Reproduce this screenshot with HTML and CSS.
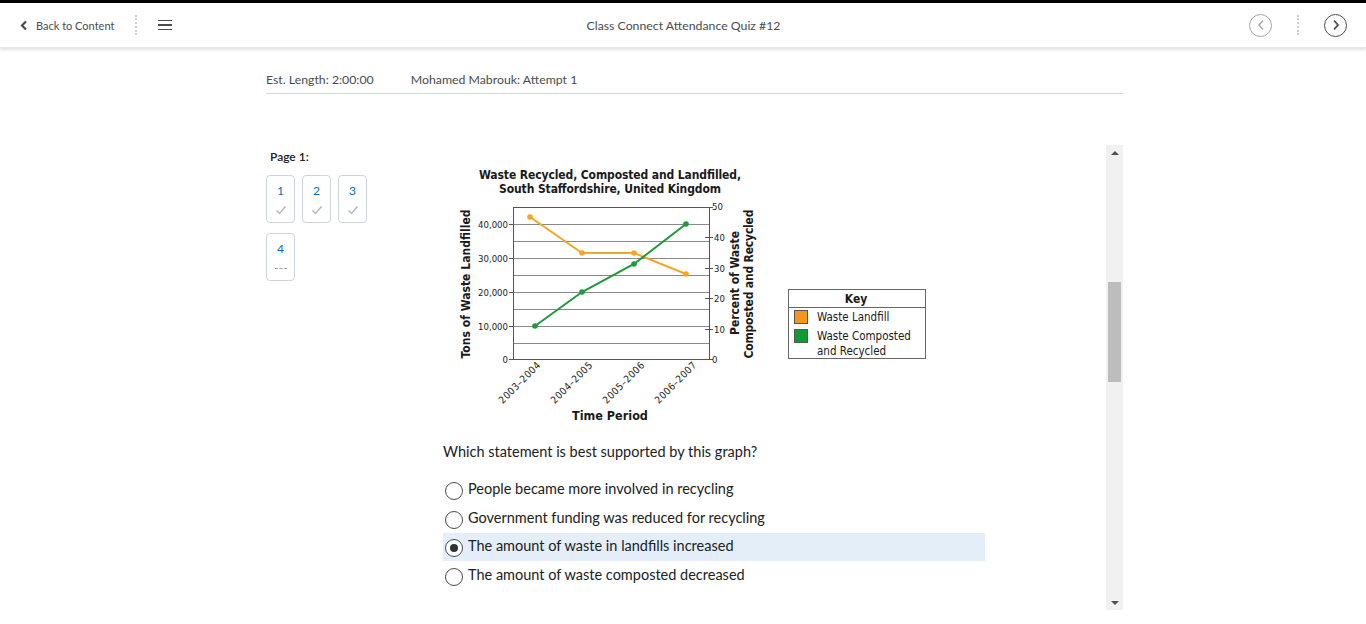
FILE: index.html
```html
<!DOCTYPE html>
<html lang="en">

<head>
    <meta charset="UTF-8">
    <meta name="viewport" content="width=device-width, initial-scale=1.0">
    <title>Class Connect Attendance Quiz #12</title>
    <link rel="stylesheet" href="styles.css">
</head>

<body>
    <div class="topbar"></div>

    <header class="navbar">
        <div class="nav-left">
            <a class="back-link" href="#">
                <svg width="8" height="11" viewBox="0 0 8 11"><path d="M6 1.5 L2 5.5 L6 9.5" fill="none" stroke="#494c4e" stroke-width="2.2"/></svg>
                Back to Content
            </a>
            <span class="dots"></span>
            <span class="menu-icon"><span></span><span></span><span></span></span>
        </div>
        <div class="nav-title">Class Connect Attendance Quiz #12</div>
        <div class="nav-right">
            <span class="circle-btn disabled">
                <svg width="8" height="12" viewBox="0 0 8 12"><path d="M6 1.5 L2 6 L6 10.5" fill="none" stroke="#a0a4a8" stroke-width="1.4"/></svg>
            </span>
            <span class="dots"></span>
            <span class="circle-btn">
                <svg width="8" height="12" viewBox="0 0 8 12"><path d="M2 1.5 L6 6 L2 10.5" fill="none" stroke="#494c4e" stroke-width="1.8"/></svg>
            </span>
        </div>
    </header>

    <main class="page-wrap">
        <div class="info-row">
            <span>Est. Length: 2:00:00</span>
            <span>Mohamed Mabrouk: Attempt 1</span>
        </div>

        <div class="quiz">
            <aside class="page-nav">
                <div class="page-label">Page 1:</div>
                <div class="qboxes">
                    <a class="qbox" href="#"><span class="qnum">1</span><svg class="check" width="12" height="10" viewBox="0 0 12 10"><path d="M1.5 5.5 L4.5 8.5 L10.5 1.5" fill="none" stroke="#b5b9bd" stroke-width="1.5"/></svg></a>
                    <a class="qbox" href="#"><span class="qnum">2</span><svg class="check" width="12" height="10" viewBox="0 0 12 10"><path d="M1.5 5.5 L4.5 8.5 L10.5 1.5" fill="none" stroke="#b5b9bd" stroke-width="1.5"/></svg></a>
                    <a class="qbox" href="#"><span class="qnum">3</span><svg class="check" width="12" height="10" viewBox="0 0 12 10"><path d="M1.5 5.5 L4.5 8.5 L10.5 1.5" fill="none" stroke="#b5b9bd" stroke-width="1.5"/></svg></a>
                    <a class="qbox" href="#"><span class="qnum">4</span><span class="unanswered"></span></a>
                </div>
            </aside>

            <section class="frame">
                <div class="frame-content">
                    <svg class="chart" width="480" height="270" viewBox="0 0 480 270">
                        <g font-family="'DejaVu Sans Condensed', 'DejaVu Sans', sans-serif" fill="#1a1a1a">
                            <text x="155" y="18" font-size="12" font-weight="bold" text-anchor="middle" textLength="262">Waste Recycled, Composted and Landfilled,</text>
                            <text x="155" y="32" font-size="12" font-weight="bold" text-anchor="middle" textLength="222">South Staffordshire, United Kingdom</text>

                            <!-- grid -->
                            <g stroke="#8a8a8a" stroke-width="1">
                                <line x1="58" y1="63.5" x2="254" y2="63.5"/>
                                <line x1="58" y1="80.5" x2="254" y2="80.5"/>
                                <line x1="58" y1="97.5" x2="254" y2="97.5"/>
                                <line x1="58" y1="114.5" x2="254" y2="114.5"/>
                                <line x1="58" y1="131.5" x2="254" y2="131.5"/>
                                <line x1="58" y1="148.5" x2="254" y2="148.5"/>
                                <line x1="58" y1="165.5" x2="254" y2="165.5"/>
                                <line x1="58" y1="182.5" x2="254" y2="182.5"/>
                            </g>
                            <rect x="58.5" y="46.5" width="196" height="152" fill="none" stroke="#555" stroke-width="1"/>

                            <!-- ticks -->
                            <g stroke="#555" stroke-width="1">
                                <line x1="54" y1="63.5" x2="58" y2="63.5"/>
                                <line x1="54" y1="97.5" x2="58" y2="97.5"/>
                                <line x1="54" y1="131.5" x2="58" y2="131.5"/>
                                <line x1="54" y1="165.5" x2="58" y2="165.5"/>
                                <line x1="54" y1="198.5" x2="58" y2="198.5"/>
                                <line x1="250" y1="46.5" x2="258" y2="46.5"/>
                                <line x1="250" y1="76.5" x2="258" y2="76.5"/>
                                <line x1="250" y1="107.5" x2="258" y2="107.5"/>
                                <line x1="250" y1="137.5" x2="258" y2="137.5"/>
                                <line x1="250" y1="168.5" x2="258" y2="168.5"/>
                                <line x1="250" y1="198.5" x2="258" y2="198.5"/>
                            </g>

                            <g font-size="9.5" text-anchor="end">
                                <text x="53" y="67">40,000</text>
                                <text x="53" y="101">30,000</text>
                                <text x="53" y="135">20,000</text>
                                <text x="53" y="169">10,000</text>
                                <text x="53" y="202">0</text>
                            </g>
                            <g font-size="9.5">
                                <text x="257" y="49">50</text>
                                <text x="259" y="80">40</text>
                                <text x="259" y="111">30</text>
                                <text x="259" y="141">20</text>
                                <text x="259" y="172">10</text>
                                <text x="257" y="202">0</text>
                            </g>

                            <!-- lines -->
                            <polyline points="75,56 127,92 179,92 231,113" fill="none" stroke="#f5a623" stroke-width="2"/>
                            <g fill="#f5a623">
                                <circle cx="75" cy="56" r="2.8"/>
                                <circle cx="127" cy="92" r="2.8"/>
                                <circle cx="179" cy="92" r="2.8"/>
                                <circle cx="231" cy="113" r="2.8"/>
                            </g>
                            <polyline points="80,165 127,131 179,103 231,63" fill="none" stroke="#1e9a3a" stroke-width="2"/>
                            <g fill="#1e9a3a">
                                <circle cx="80" cy="165" r="2.8"/>
                                <circle cx="127" cy="131" r="2.8"/>
                                <circle cx="179" cy="103" r="2.8"/>
                                <circle cx="231" cy="63" r="2.8"/>
                            </g>

                            <text transform="translate(15 123) rotate(-90)" font-size="12" font-weight="bold" text-anchor="middle" textLength="149">Tons of Waste Landfilled</text>
                            <text transform="translate(284 122) rotate(-90)" font-size="12" font-weight="bold" text-anchor="middle" textLength="104">Percent of Waste</text>
                            <text transform="translate(298 123) rotate(-90)" font-size="12" font-weight="bold" text-anchor="middle" textLength="149">Composted and Recycled</text>

                            <g font-size="10" text-anchor="end">
                                <text transform="translate(86 205) rotate(-45)" textLength="54">2003–2004</text>
                                <text transform="translate(138 205) rotate(-45)" textLength="54">2004–2005</text>
                                <text transform="translate(190 205) rotate(-45)" textLength="54">2005–2006</text>
                                <text transform="translate(242 205) rotate(-45)" textLength="54">2006–2007</text>
                            </g>
                            <text x="155" y="259" font-size="12.5" font-weight="bold" text-anchor="middle">Time Period</text>

                            <!-- key -->
                            <rect x="333.5" y="128.5" width="137" height="69" fill="#fff" stroke="#666"/>
                            <line x1="333.5" y1="146.5" x2="470.5" y2="146.5" stroke="#666"/>
                            <text x="401" y="142" font-size="12" font-weight="bold" text-anchor="middle">Key</text>
                            <rect x="339.5" y="149.5" width="13" height="13" fill="#f7941d" stroke="#555"/>
                            <text x="362" y="160" font-size="11.5">Waste Landfill</text>
                            <rect x="339.5" y="168.5" width="13" height="13" fill="#0e9a35" stroke="#555"/>
                            <text x="362" y="179" font-size="11.5">Waste Composted</text>
                            <text x="362" y="194" font-size="11.5">and Recycled</text>
                        </g>
                    </svg>

                    <p class="question">Which statement is best supported by this graph?</p>

                    <ul class="options">
                        <li class="option"><input type="radio" name="q4"><span>People became more involved in recycling</span></li>
                        <li class="option"><input type="radio" name="q4"><span>Government funding was reduced for recycling</span></li>
                        <li class="option selected"><input type="radio" name="q4" checked><span>The amount of waste in landfills increased</span></li>
                        <li class="option"><input type="radio" name="q4"><span>The amount of waste composted decreased</span></li>
                    </ul>
                </div>

                <div class="scrollbar">
                    <div class="scroll-arrow up"></div>
                    <div class="scroll-track"><div class="scroll-thumb"></div></div>
                    <div class="scroll-arrow down"></div>
                </div>
            </section>
        </div>
    </main>
</body>

</html>
```

FILE: styles.css
```css
body {
    font-family: Lato, "Open Sans", Arial, sans-serif;
    background: white;
    margin: 0;
    padding: 0;
    color: #494c4e;
    overflow: hidden;
}

.topbar {
    height: 3px;
    background: #000;
}

.navbar {
    display: grid;
    grid-template-columns: 1fr auto 1fr;
    align-items: center;
    height: 45px;
    padding: 0 19px 0 20px;
    background: white;
    box-shadow: 0 2px 3px rgba(0, 0, 0, 0.12);
    border-bottom: 1px solid #e6e6e6;
    box-sizing: border-box;
    position: relative;
}

.nav-left {
    display: flex;
    align-items: center;
}

.back-link {
    display: flex;
    align-items: center;
    gap: 8px;
    font-size: 11px;
    color: #494c4e;
    text-decoration: none;
}

.dots {
    display: inline-block;
    width: 0;
    height: 20px;
    border-left: 2px dotted #c8cdd2;
}

.nav-left .dots {
    margin: 0 21px 0 21px;
}

.menu-icon {
    display: flex;
    flex-direction: column;
    gap: 3px;
    width: 14px;
}

.menu-icon span {
    height: 1.5px;
    background: #494c4e;
}

.nav-title {
    font-size: 12.3px;
    color: #494c4e;
}

.nav-right {
    display: flex;
    align-items: center;
    justify-content: flex-end;
}

.nav-right .dots {
    margin: 0 25px 0 25px;
}

.circle-btn {
    display: flex;
    align-items: center;
    justify-content: center;
    width: 23px;
    height: 23px;
    box-sizing: border-box;
    border: 1.5px solid #494c4e;
    border-radius: 50%;
}

.circle-btn.disabled {
    border: 1px solid #a0a4a8;
}

.page-wrap {
    width: 857px;
    margin-left: 266px;
}

.info-row {
    display: flex;
    gap: 37px;
    font-size: 12.3px;
    line-height: 20px;
    padding: 22px 0 3px;
    border-bottom: 1px solid #d3d9e3;
}

.quiz {
    display: flex;
    margin-top: 51px;
    height: 465px;
}

.page-nav {
    width: 164px;
    flex-shrink: 0;
}

.page-label {
    font-size: 12px;
    font-weight: 600;
    color: #202122;
    line-height: 16px;
    margin: 4px 0 10px 4px;
}

.qboxes {
    display: flex;
    flex-wrap: wrap;
    gap: 10px 7px;
    width: 105px;
}

.qbox {
    display: flex;
    flex-direction: column;
    align-items: center;
    width: 29px;
    height: 48px;
    padding-top: 7px;
    box-sizing: border-box;
    border: 1px solid #cdd5dc;
    border-radius: 4px;
    text-decoration: none;
}

.qnum {
    font-size: 12px;
    line-height: 16px;
    color: #006fbf;
}

.check {
    margin-top: 6px;
}

.unanswered {
    width: 12px;
    height: 0;
    margin-top: 11px;
    border-top: 1px dashed #a0a4a8;
}

.frame {
    flex: 1;
    display: flex;
}

.frame-content {
    flex: 1;
    padding: 16px 0 0 13px;
    overflow: hidden;
}

.chart {
    display: block;
    margin-left: 12px;
}

.question {
    font-size: 14.5px;
    line-height: 20px;
    color: #202122;
    margin: 11px 0 14px;
}

.options {
    list-style: none;
    padding: 0;
    margin: 0;
    width: 542px;
    display: flex;
    flex-direction: column;
    gap: 0.7px;
}

.option {
    display: flex;
    align-items: center;
    height: 28px;
    padding-left: 2px;
    font-size: 14.5px;
    color: #202122;
}

.option span {
    margin-top: -3px;
}

.option.selected {
    background: #e4eef9;
}

.option input {
    appearance: none;
    width: 18px;
    height: 18px;
    margin: 2px 5px 0 0;
    border: 1px solid #494c4e;
    border-radius: 50%;
    background: white;
    display: grid;
    place-items: center;
}

.option input:checked::after {
    content: "";
    width: 8px;
    height: 8px;
    border-radius: 50%;
    background: #303335;
}

.scrollbar {
    width: 17px;
    display: flex;
    flex-direction: column;
    background: #f1f1f1;
}

.scroll-arrow {
    height: 15px;
    display: flex;
    align-items: center;
    justify-content: center;
}

.scroll-arrow.up::before {
    content: "";
    border: 4px solid transparent;
    border-bottom: 4px solid #505050;
    border-top: none;
}

.scroll-arrow.down::before {
    content: "";
    border: 4px solid transparent;
    border-top: 4px solid #505050;
    border-bottom: none;
}

.scroll-track {
    flex: 1;
}

.scroll-thumb {
    margin: 122px 2px 0;
    height: 100px;
    background: #bdbdbd;
}
```
